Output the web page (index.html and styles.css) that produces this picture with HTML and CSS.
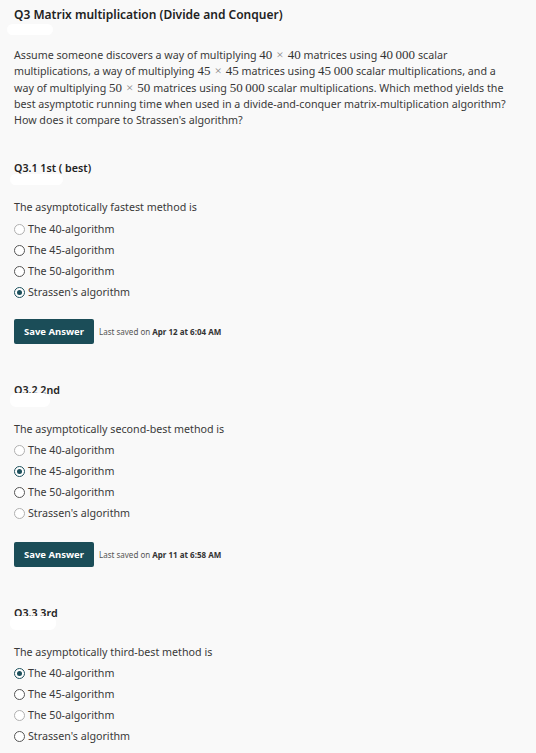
FILE: index.html
```html
<!DOCTYPE html>
<html lang="en">
<head>
<meta charset="utf-8">
<title>Q3 Matrix multiplication</title>
<link rel="stylesheet" href="styles.css">
</head>
<body>
<div class="page">
  <h1 class="title">Q3 Matrix multiplication (Divide and Conquer)</h1>
  <div class="blob blob-title"></div>
  <p class="prompt">Assume someone discovers a way of multiplying <span class="math">40<span class="times">×</span>40</span> matrices using <span class="math">40&#8201;000</span> scalar multiplications, a way of multiplying <span class="math">45<span class="times">×</span>45</span> matrices using <span class="math">45&#8201;000</span> scalar multiplications, and a way of multiplying <span class="math">50<span class="times">×</span>50</span> matrices using <span class="math">50&#8201;000</span> scalar multiplications. Which method yields the best asymptotic running time when used in a divide-and-conquer matrix-multiplication algorithm? How does it compare to Strassen's algorithm?</p>

  <section class="part">
    <h2 class="part-title">Q3.1 1st ( best)</h2>
    <div class="blob blob-1"></div>
    <p class="question">The asymptotically fastest method is</p>
    <ul class="options">
      <li class="option"><span class="radio faint"></span>The 40-algorithm</li>
      <li class="option"><span class="radio"></span>The 45-algorithm</li>
      <li class="option"><span class="radio"></span>The 50-algorithm</li>
      <li class="option"><span class="radio checked"></span>Strassen's algorithm</li>
    </ul>
    <div class="save-row">
      <button class="save">Save Answer</button>
      <span class="saved">Last saved on <b>Apr 12 at 6:04 AM</b></span>
    </div>
  </section>

  <section class="part">
    <h2 class="part-title">Q3.2 2nd</h2>
    <div class="blob blob-2"></div>
    <p class="question">The asymptotically second-best method is</p>
    <ul class="options">
      <li class="option"><span class="radio faint"></span>The 40-algorithm</li>
      <li class="option"><span class="radio checked"></span>The 45-algorithm</li>
      <li class="option"><span class="radio"></span>The 50-algorithm</li>
      <li class="option"><span class="radio faint"></span>Strassen's algorithm</li>
    </ul>
    <div class="save-row">
      <button class="save">Save Answer</button>
      <span class="saved">Last saved on <b>Apr 11 at 6:58 AM</b></span>
    </div>
  </section>

  <section class="part">
    <h2 class="part-title">Q3.3 3rd</h2>
    <div class="blob blob-3"></div>
    <p class="question">The asymptotically third-best method is</p>
    <ul class="options">
      <li class="option"><span class="radio checked"></span>The 40-algorithm</li>
      <li class="option"><span class="radio"></span>The 45-algorithm</li>
      <li class="option"><span class="radio faint"></span>The 50-algorithm</li>
      <li class="option"><span class="radio"></span>Strassen's algorithm</li>
    </ul>
  </section>
</div>
</body>
</html>
```
FILE: styles.css
```css
html, body {
  margin: 0;
  padding: 0;
  background: #f9f9f9;
}
body {
  font-family: "Noto Sans", "Open Sans", sans-serif;
  color: #333;
  font-size: 10.7px;
}
.page {
  padding: 7px 14px 0 14px;
}
.title {
  margin: 0;
  font-size: 12px;
  line-height: 16px;
  font-weight: 600;
  color: #222;
}
.blob {
  position: relative;
  background: #fff;
  border-radius: 6px;
  height: 11px;
}
.blob-title {
  width: 46px;
  margin: 1px 0 0 -7px;
}
.prompt {
  margin: 12px 0 0 0;
  line-height: 16.3px;
  color: #3a3a3a;
  max-width: 496px;
}
.math {
  font-family: "Liberation Serif", "Times New Roman", serif;
  font-size: 13px;
  line-height: 0;
  color: #333;
}
.times {
  color: #888;
  margin: 0 4px;
}
.part {
  margin-top: 32px;
}
.part + .part {
  margin-top: 38px;
}
.part-title {
  margin: 0;
  font-size: 10.7px;
  font-weight: 600;
  line-height: 16px;
  color: #222;
}
.blob-1 { width: 53px; margin: -2px 0 0 -4px; height: 11px; }
.blob-2 { width: 40px; margin: -5px 0 0 -4px; height: 14px; }
.blob-3 { width: 46px; margin: -5px 0 0 -4px; height: 14px; }
.question {
  margin: 14px 0 0 0;
  line-height: 16px;
  color: #3a3a3a;
}
.options {
  list-style: none;
  margin: 6px 0 0 0;
  padding: 0;
  display: flex;
  flex-direction: column;
  gap: 5px;
}
.part + .part .options {
  margin-top: 5px;
}
.option {
  display: flex;
  align-items: center;
  gap: 3px;
  line-height: 16px;
  color: #3a3a3a;
}
.radio {
  box-sizing: border-box;
  width: 11px;
  height: 11px;
  border-radius: 50%;
  border: 1px solid #555;
  background: #fff;
  display: inline-flex;
  align-items: center;
  justify-content: center;
  flex: none;
}
.radio.faint {
  border-color: #b0b0b0;
}
.radio.checked {
  border: 1.5px solid #1c4f5b;
}
.radio.checked::after {
  content: "";
  width: 5px;
  height: 5px;
  border-radius: 50%;
  background: #1c4f5b;
}
.save-row {
  display: flex;
  align-items: center;
  gap: 5px;
  margin-top: 19px;
}
.part + .part .save-row {
  margin-top: 21px;
}
.save {
  width: 80px;
  height: 25px;
  border: none;
  border-radius: 2px;
  background: #1b4d58;
  color: #fff;
  font-family: "Noto Sans", "Open Sans", sans-serif;
  font-size: 9.5px;
  font-weight: 700;
  padding: 0;
}
.saved {
  font-size: 8px;
  color: #555;
}
.saved b {
  color: #333;
  font-weight: 700;
}
```
